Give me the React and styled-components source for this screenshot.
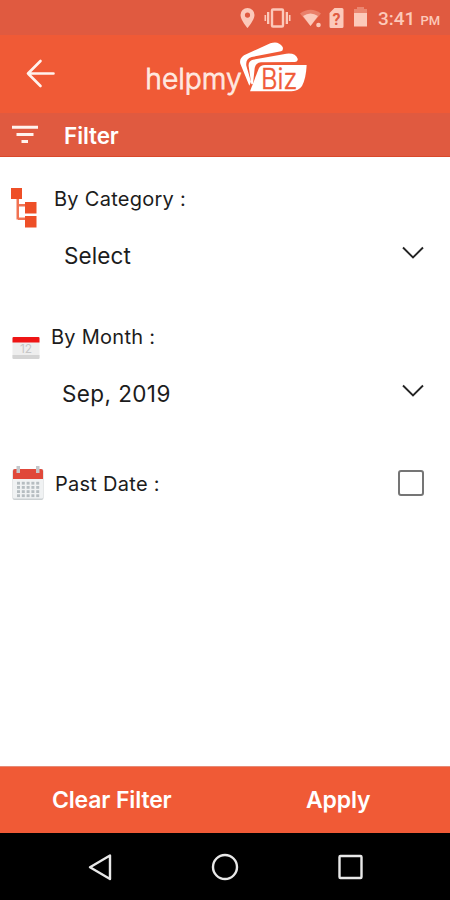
import React, { useState } from "react";
import styled, { createGlobalStyle } from "styled-components";

const GlobalStyle = createGlobalStyle`
  * {
    box-sizing: border-box;
  }

  body {
    margin: 0;
    background: #ffffff;
    font-family: Inter, "Liberation Sans", sans-serif;
  }

  button {
    border: 0;
    padding: 0;
    background: none;
    font-family: inherit;
  }

  svg {
    display: block;
    flex-shrink: 0;
  }
`;

const Screen = styled.div`
  width: 450px;
  height: 900px;
  display: flex;
  flex-direction: column;
  overflow: hidden;
  background: #ffffff;
`;

const StatusBar = styled.div`
  height: 35px;
  flex-shrink: 0;
  display: flex;
  align-items: center;
  justify-content: flex-end;
  padding-right: 8px;
  background: #e05a40;
  color: #fcc9ba;
`;

const Clock = styled.div`
  margin-left: 10px;
  padding-top: 2px;
  width: 64px;
  font-family: Roboto, sans-serif;
  font-size: 19px;
  font-weight: 500;
  white-space: nowrap;

  small {
    margin-left: 5px;
    font-size: 13px;
  }
`;

const Header = styled.header`
  height: 78px;
  flex-shrink: 0;
  display: flex;
  align-items: flex-start;
  background: #f05a36;
`;

const BackButton = styled.button`
  padding: 24px 0 0 25px;
  width: 135px;
`;

const TitleBar = styled.div`
  height: 44px;
  flex-shrink: 0;
  display: flex;
  align-items: center;
  padding-left: 12px;
  background: #e05a40;
  border-bottom: 1px solid #d9492b;
`;

const Title = styled.h1`
  margin: 1px 0 0 26px;
  color: #ffffff;
  font-size: 22.5px;
  font-weight: 600;
  letter-spacing: -0.1px;
`;

const Content = styled.main`
  flex: 1;
  padding-top: 27px;
`;

const FilterGroup = styled.section`
  height: ${({ $height }) => $height}px;
`;

const FilterRow = styled.div`
  height: 30px;
  display: flex;
  padding-left: ${({ $indent }) => $indent}px;
`;

const IconSlot = styled.div`
  margin-top: ${({ $top }) => $top}px;
`;

const Label = styled.span`
  margin-left: ${({ $gap }) => $gap}px;
  color: #1c1c1c;
  font-size: 20px;
  line-height: 30px;
  letter-spacing: 0.27px;
  white-space: nowrap;
`;

const SelectButton = styled.button`
  width: 100%;
  height: 32px;
  margin-top: 25px;
  padding: 0 25px 0 ${({ $indent }) => $indent}px;
  display: flex;
  align-items: center;
  justify-content: space-between;
  color: #1c1c1c;
  font-size: 22.5px;
  letter-spacing: ${({ $spacing }) => $spacing || 0.1}px;

  svg {
    margin-bottom: 5px;
  }
`;

const Checkbox = styled.button`
  width: 26px;
  height: 26px;
  margin: 1px 26px 0 auto;
  border: 2.5px solid #757575;
  border-radius: 3px;
  background: ${({ $checked }) => ($checked ? "#f05a36" : "#ffffff")};
`;

const Footer = styled.footer`
  height: 67px;
  flex-shrink: 0;
  display: flex;
  background: #f05a36;
  border-top: 1px solid #e68a76;
`;

const FooterButton = styled.button`
  flex: 1;
  padding: 0 0 1px ${({ $shift }) => $shift || 0}px;
  color: #ffffff;
  font-size: 23px;
  font-weight: 600;
  letter-spacing: -0.15px;
`;

const NavBar = styled.nav`
  height: 67px;
  flex-shrink: 0;
  display: flex;
  align-items: center;
  justify-content: space-between;
  padding: 0 86px;
  background: #000000;
`;

const StatusIcons = () => (
  <svg width="136" height="35" viewBox="232 0 136 35" fill="#fcc9ba">
    <path
      fillRule="evenodd"
      d="M247.500 8a7 7 0 0 0-7 7c0 5 7 13 7 13s7-8 7-13a7 7 0 0 0-7-7zm0 4.500a2.600 2.600 0 1 1 0 5.200a2.600 2.600 0 0 1 0-5.200z"
    />
    <rect x="272" y="9.500" width="11" height="17" rx="1" fill="none" stroke="#fcc9ba" strokeWidth="2.400" />
    <path d="M267 12h2.300v12H267zM285.700 12h2.300v12h-2.300zM264.500 15h1.600v6h-1.600zM288.900 15h1.600v6h-1.600z" />
    <path opacity=".35" d="M300 13.500Q310.500 6 321 13.500L310.500 26z" />
    <path d="M303 16Q310.500 11 318 16L310.500 26z" />
    <circle cx="318.500" cy="25" r="2.300" />
    <path d="M334.500 8H342a1.500 1.500 0 0 1 1.500 1.500v17a1.500 1.500 0 0 1-1.500 1.500h-11a1.500 1.500 0 0 1-1.500-1.500V13z" />
    <text
      x="336.500"
      y="24.500"
      fill="#e05a40"
      fontFamily="Roboto, sans-serif"
      fontSize="16"
      fontWeight="700"
      textAnchor="middle"
    >
      ?
    </text>
    <path opacity=".4" d="M354 9h3V7h7v2h3v4h-13z" />
    <path d="M354 13h13v13.500h-13z" />
  </svg>
);

const Logo = () => (
  <svg width="185" height="70" viewBox="0 0 555 210">
    <text
      x="31"
      y="163"
      fill="#ffe9e0"
      stroke="#ffe9e0"
      strokeWidth="2.400"
      fontFamily='Inter, "Liberation Sans", sans-serif'
      fontSize="86"
      fontWeight="300"
      textLength="289"
      lengthAdjust="spacingAndGlyphs"
    >
      helpmy
    </text>
    <path
      fill="#ffffff"
      d="M343 152L316 86Q312 71 327 61L406 25Q430 16 443 36Q446 46 438 49L350 66Q331 72 334 92L348 140z"
    />
    <path
      fill="#ffffff"
      d="M349 148L341 94Q339 78 354 74L454 56Q482 53 488 71Q490 80 480 81L378 82Q362 83 359 100L354 146z"
    />
    <path fill="#ffffff" d="M345 169L371 101Q376 90 390 90H515Q513 131 501 153Q491 168 470 169z" />
    <text
      x="378"
      y="162"
      fill="#f05a36"
      stroke="#f05a36"
      strokeWidth="1.500"
      fontFamily='Inter, "Liberation Sans", sans-serif'
      fontSize="84"
      fontWeight="300"
      textLength="109"
      lengthAdjust="spacingAndGlyphs"
    >
      Biz
    </text>
  </svg>
);

const BackArrow = () => (
  <svg width="32" height="30" viewBox="0 0 32 30" fill="none" stroke="#fff3ee" strokeWidth="2.600" strokeLinecap="round">
    <path d="M15.500 2L3 14.500L15.500 27M3 14.500H28.500" strokeLinejoin="round" />
  </svg>
);

const FilterIcon = () => (
  <svg width="26" height="20" viewBox="0 0 26 20" fill="#fff3ee">
    <path d="M0 .8h26v3H0zM4.500 8h17v3h-17zM9.500 15h6.500v3H9.500z" />
  </svg>
);

const CategoryIcon = () => (
  <svg width="26" height="40" viewBox="0 0 26 40" fill="#ee4f27">
    <path opacity=".8" d="M5.500 10H8v21.500H5.500zM7 16h9v2.500H7zM7 29.500h9V32H7z" />
    <path d="M0 0h11v11H0zM14 14h11.500v11.500H14zM14 28h11.500v11.500H14z" />
  </svg>
);

const MonthIcon = () => (
  <svg width="28" height="24" viewBox="0 0 28 24">
    <rect x=".5" y="1" width="27" height="22" rx="1.500" fill="#eeeeee" />
    <path d="M.5 19h27V22q0 1-1 1h-25q-1 0-1-1z" fill="#d4d4d4" />
    <path d="M1.500 1h25q1 0 1 1v4.500H.5V2q0-1 1-1z" fill="#ee1515" />
    <text
      x="14"
      y="16.500"
      fill="#c6c6c6"
      fontFamily="Inter, sans-serif"
      fontSize="12"
      textAnchor="middle"
    >
      12
    </text>
  </svg>
);

const DateIcon = () => (
  <svg width="32" height="36" viewBox="0 0 32 36">
    <rect x=".5" y="4" width="31" height="31" rx="2" fill="#cbd0d2" />
    <rect x="1" y="12" width="30" height="21.500" rx="1" fill="#f0f2f3" />
    <path d="M3 4h26q2 0 2 2v8H1V6q0-2 2-2z" fill="#e0483a" />
    <path d="M4.500 1h3.500v7H4.500zM24 1h3.500v7H24z" fill="#c5c7ca" />
    {[17.5, 21.7, 25.9, 30].map((y) =>
      [5, 9.8, 14.6, 19.4, 24.2].map((x) => (
        <rect key={`${x}-${y}`} x={x} y={y - 0.7} width="3" height="2.800" fill="#b6bdc1" />
      ))
    )}
  </svg>
);

const Chevron = () => (
  <svg width="24" height="14" viewBox="0 0 24 14" fill="none" stroke="#242424" strokeWidth="1.900">
    <path d="M2 1.500L12 11.500L22 1.500" />
  </svg>
);

const App = () => {
  const [pastDate, setPastDate] = useState(false);

  return (
    <>
      <GlobalStyle />
      <Screen>
        <StatusBar>
          <StatusIcons />
          <Clock>
            3:41<small>PM</small>
          </Clock>
        </StatusBar>
        <Header>
          <BackButton aria-label="Back">
            <BackArrow />
          </BackButton>
          <Logo />
        </Header>
        <TitleBar>
          <FilterIcon />
          <Title>Filter</Title>
        </TitleBar>
        <Content>
          <FilterGroup $height={138}>
            <FilterRow $indent={11}>
              <IconSlot $top={4}>
                <CategoryIcon />
              </IconSlot>
              <Label $gap={17}>By Category :</Label>
            </FilterRow>
            <SelectButton $indent={64}>
              Select
              <Chevron />
            </SelectButton>
          </FilterGroup>
          <FilterGroup $height={147}>
            <FilterRow $indent={12}>
              <IconSlot $top={14}>
                <MonthIcon />
              </IconSlot>
              <Label $gap={11}>By Month :</Label>
            </FilterRow>
            <SelectButton $indent={62} $spacing={0.4}>
              Sep, 2019
              <Chevron />
            </SelectButton>
          </FilterGroup>
          <FilterRow $indent={12}>
            <IconSlot $top={-4}>
              <DateIcon />
            </IconSlot>
            <Label $gap={11}>Past Date :</Label>
            <Checkbox
              role="checkbox"
              aria-label="Past Date"
              aria-checked={pastDate}
              $checked={pastDate}
              onClick={() => setPastDate(!pastDate)}
            />
          </FilterRow>
        </Content>
        <Footer>
          <FooterButton>Clear Filter</FooterButton>
          <FooterButton $shift={3}>Apply</FooterButton>
        </Footer>
        <NavBar>
          <svg width="28" height="30" viewBox="0 0 28 30" fill="none" stroke="#e8e8e8" strokeWidth="2.400">
            <path d="M24 3.500V27L4 15.200z" strokeLinejoin="round" />
          </svg>
          <svg width="28" height="28" viewBox="0 0 28 28" fill="none" stroke="#e8e8e8" strokeWidth="2.400">
            <circle cx="14" cy="14" r="12" />
          </svg>
          <svg width="28" height="28" viewBox="0 0 28 28" fill="none" stroke="#e8e8e8" strokeWidth="2.400">
            <rect x="3.500" y="3" width="22" height="22" rx="1" />
          </svg>
        </NavBar>
      </Screen>
    </>
  );
};

export default App;
